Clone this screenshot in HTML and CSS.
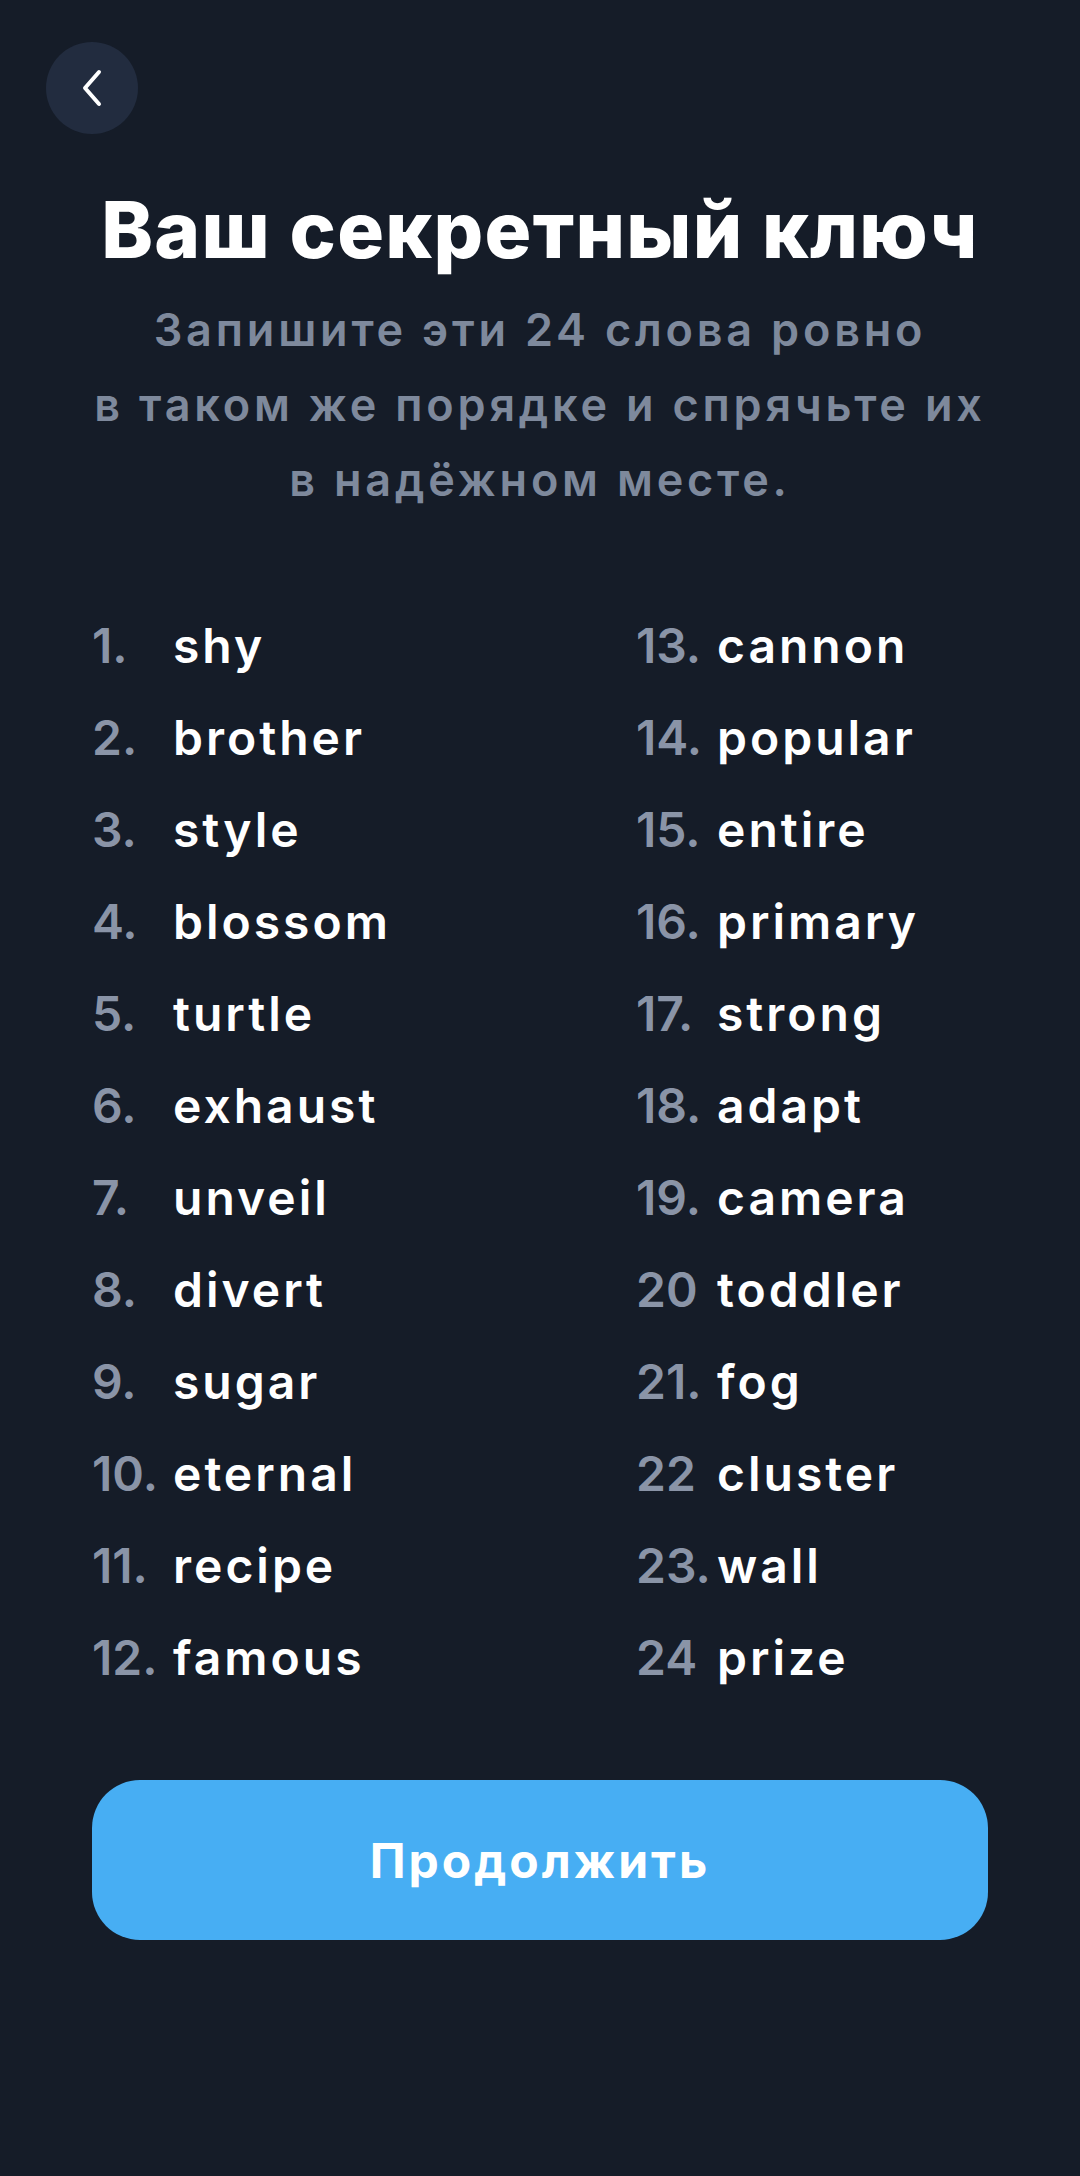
FILE: index.html
```html
<!DOCTYPE html>
<html lang="ru">

<head>
  <meta charset="utf-8">
  <title>Секретный ключ</title>
  <meta name="viewport" content="width=device-width, initial-scale=1.0">
  <link rel="stylesheet" href="styles.css">
</head>

<body>
  <div class="screen">
    <header class="top-bar">
      <button class="btn-back" type="button" aria-label="Назад">
        <svg width="24" height="40" viewBox="0 0 24 40">
          <path d="M19 4 L5 20 L19 36" fill="none" stroke="#ffffff" stroke-width="4" stroke-linecap="round" stroke-linejoin="round"/>
        </svg>
      </button>
    </header>

    <main class="content">
      <h1 class="title">Ваш секретный ключ</h1>
      <p class="subtitle">Запишите эти 24 слова ровно<br>в таком же порядке и спрячьте их<br>в надёжном месте.</p>

      <!-- seed phrase, two columns of 12 -->
      <ol class="words">
        <li><span class="num">1.</span><span class="word">shy</span></li>
        <li><span class="num">13.</span><span class="word">cannon</span></li>
        <li><span class="num">2.</span><span class="word">brother</span></li>
        <li><span class="num">14.</span><span class="word">popular</span></li>
        <li><span class="num">3.</span><span class="word">style</span></li>
        <li><span class="num">15.</span><span class="word">entire</span></li>
        <li><span class="num">4.</span><span class="word">blossom</span></li>
        <li><span class="num">16.</span><span class="word">primary</span></li>
        <li><span class="num">5.</span><span class="word">turtle</span></li>
        <li><span class="num">17.</span><span class="word">strong</span></li>
        <li><span class="num">6.</span><span class="word">exhaust</span></li>
        <li><span class="num">18.</span><span class="word">adapt</span></li>
        <li><span class="num">7.</span><span class="word">unveil</span></li>
        <li><span class="num">19.</span><span class="word">camera</span></li>
        <li><span class="num">8.</span><span class="word">divert</span></li>
        <li><span class="num">20</span><span class="word">toddler</span></li>
        <li><span class="num">9.</span><span class="word">sugar</span></li>
        <li><span class="num">21.</span><span class="word">fog</span></li>
        <li><span class="num">10.</span><span class="word">eternal</span></li>
        <li><span class="num">22</span><span class="word">cluster</span></li>
        <li><span class="num">11.</span><span class="word">recipe</span></li>
        <li><span class="num">23.</span><span class="word">wall</span></li>
        <li><span class="num">12.</span><span class="word">famous</span></li>
        <li><span class="num">24</span><span class="word">prize</span></li>
      </ol>

      <button class="btn-continue" type="button">Продолжить</button>
    </main>
  </div>
</body>

</html>
```

FILE: styles.css
```css
:root {
  --bg-color: #151c28;
  --circle-color: #222c3f;
  --muted-color: #7e899c;
  --num-color: #8a94a7;
  --accent-color: #47aef3;
  --text-color: #ffffff;
}

html,
body {
  margin: 0;
  background-color: var(--bg-color);
}

body {
  font-family: Inter, "Open Sans", sans-serif;
  color: var(--text-color);
}

.screen {
  min-height: 2176px;
}

.top-bar {
  padding: 42px 0 0 46px;
}

.btn-back {
  width: 92px;
  height: 92px;
  border: 0;
  border-radius: 50%;
  background-color: var(--circle-color);
  display: flex;
  align-items: center;
  justify-content: center;
  padding: 0;
  cursor: pointer;
}

.content {
  padding: 0 92px;
}

.title {
  margin: 48px 0 0;
  font-size: 78px;
  line-height: 96px;
  font-weight: 800;
  text-align: center;
  letter-spacing: 1.3px;
}

.subtitle {
  margin: 14px 0 0;
  font-size: 45px;
  line-height: 75px;
  font-weight: 600;
  color: var(--muted-color);
  text-align: center;
  letter-spacing: 3.8px;
}

.words {
  list-style: none;
  margin: 83px 0 0;
  padding: 0;
  display: grid;
  grid-template-columns: 544px auto;
}

.words li {
  display: flex;
  height: 92px;
  line-height: 92px;
  font-size: 48px;
  font-weight: 600;
}

.num {
  width: 81px;
  color: var(--num-color);
}

.word {
  color: var(--text-color);
  letter-spacing: 3px;
}

.btn-continue {
  display: block;
  width: 100%;
  height: 160px;
  margin-top: 76px;
  border: 0;
  border-radius: 48px;
  background-color: var(--accent-color);
  color: var(--text-color);
  font-family: Inter, "Open Sans", sans-serif;
  font-size: 48px;
  font-weight: 700;
  letter-spacing: 3px;
  cursor: pointer;
}
```
